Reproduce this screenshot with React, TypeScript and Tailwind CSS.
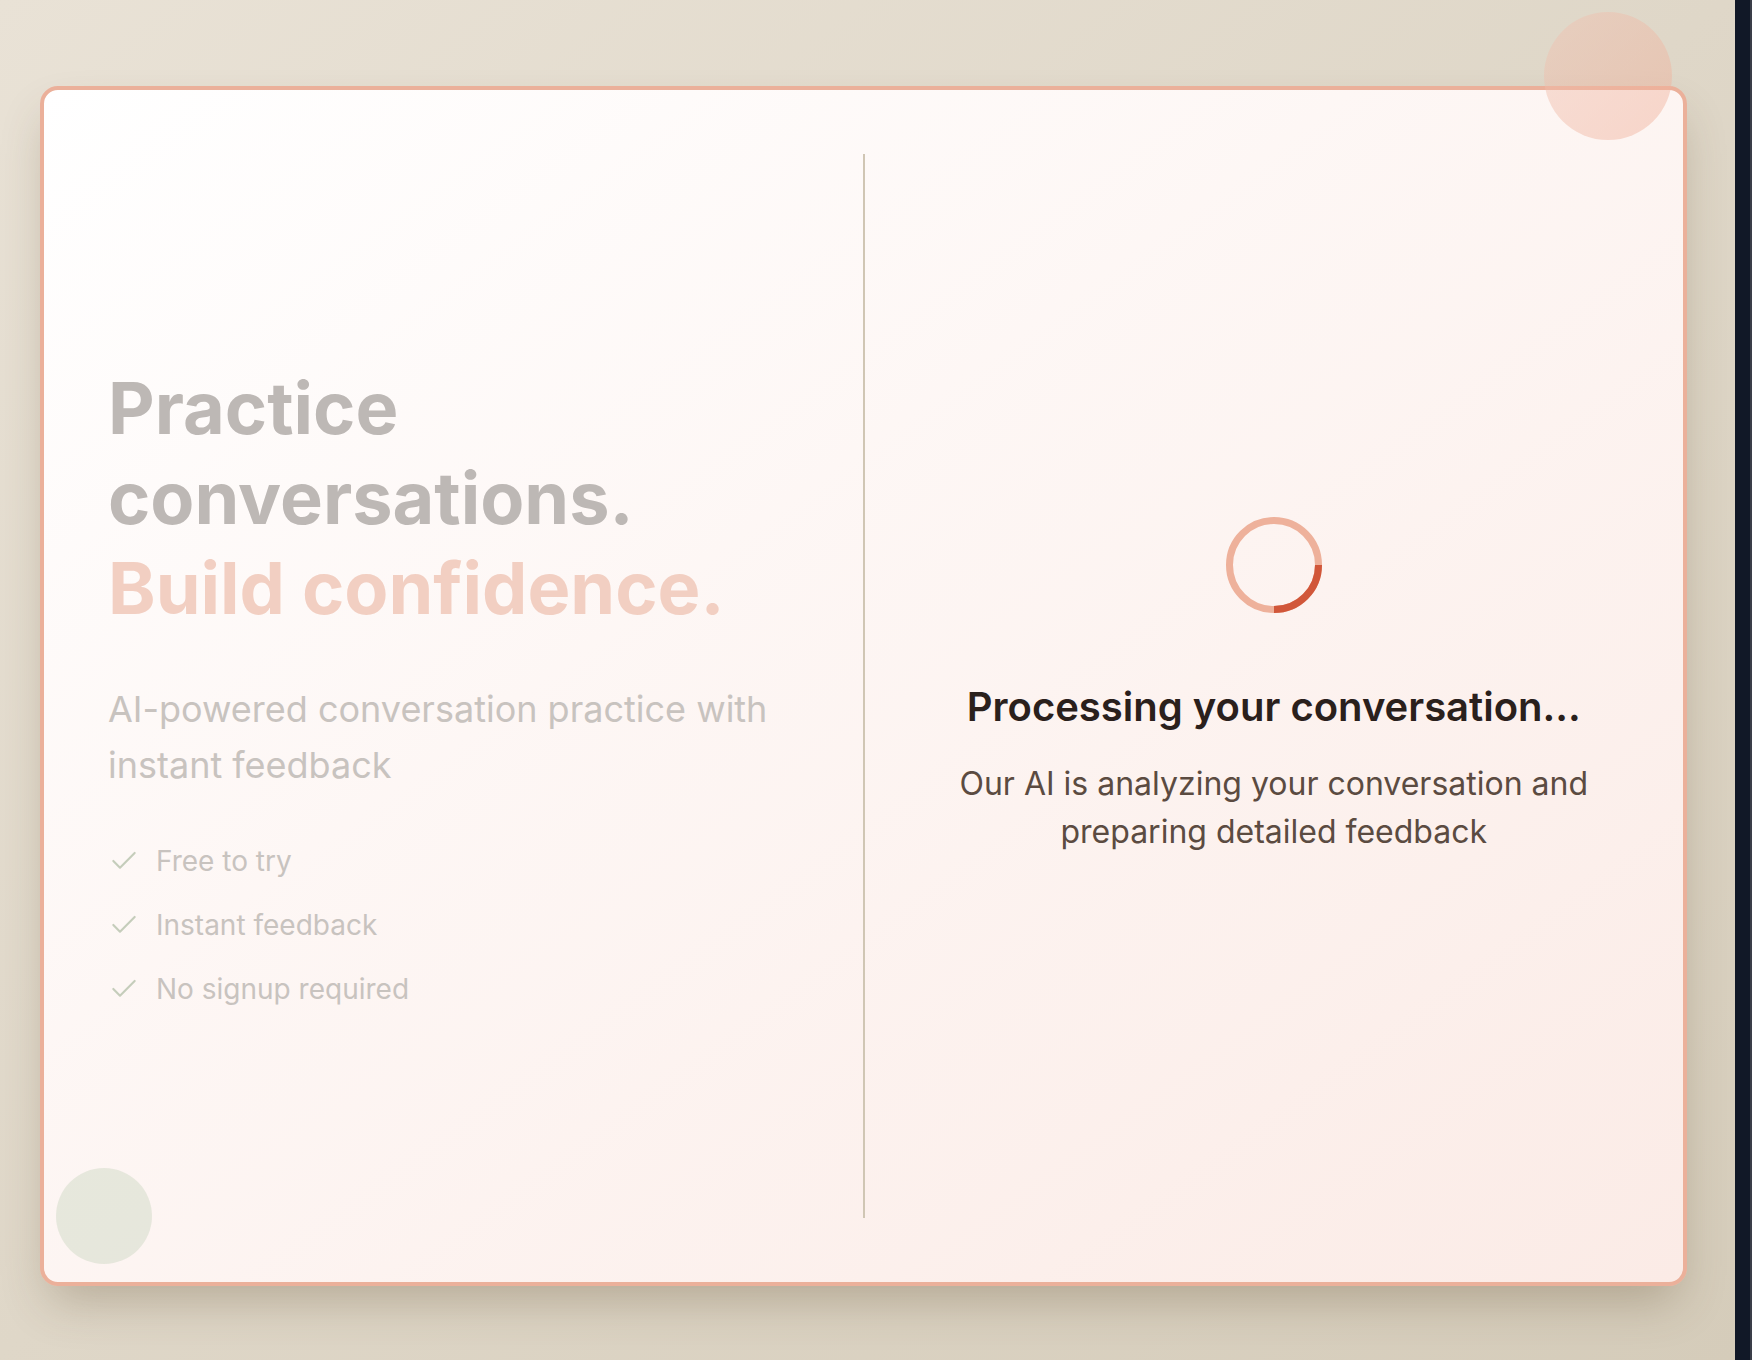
import { Check } from "lucide-react";

const perks = ["Free to try", "Instant feedback", "No signup required"];

// Quarter arc over a pale ring, like a border spinner caught mid-turn.
function Spinner() {
  return (
    <svg width="96" height="96" viewBox="0 0 96 96" aria-hidden="true">
      <circle cx="48" cy="48" r="44.5" fill="none" stroke="#eeb19b" strokeWidth="7" />
      <path d="M92.5 48 A44.5 44.5 0 0 1 48 92.5" fill="none" stroke="#d1573a" strokeWidth="7" />
    </svg>
  );
}

export default function App() {
  return (
    <div className="flex h-[1360px] w-full overflow-hidden font-['Inter',sans-serif]">
      <main className="flex-1 bg-linear-to-br from-[#e9e2d6] to-[#d5ccba] pl-10 pr-12 pt-[86px]">
        <section className="relative h-[1200px] rounded-[18px] border-4 border-[#ebb09a] bg-linear-to-br from-white to-[#fbebe6] shadow-[0_24px_48px_-10px_rgba(90,70,40,0.3)]">
          <span className="absolute -top-[78px] right-[11px] z-10 h-32 w-32 rounded-full bg-linear-to-br from-[#efc3b3]/45 to-[#f0ad96]/45" />
          <span className="absolute bottom-[18px] left-[12px] h-24 w-24 rounded-full bg-[#b4c8aa]/30" />

          <div className="grid h-full grid-cols-[1fr_2px_1fr] py-16">
            <div className="flex flex-col justify-center pl-16 pr-14">
              <h1 className="text-[72px] font-bold leading-[90px] text-[#bdb8b5]">
                Practice
                <br />
                conversations.
                <br />
                <span className="text-[#f2cfc2]">Build confidence.</span>
              </h1>
              <p className="mt-12 text-[36px] leading-[56px] text-[#c8c3bf]">
                AI-powered conversation practice with instant feedback
              </p>
              <ul className="mt-12 flex flex-col gap-6">
                {perks.map((perk) => (
                  <li key={perk} className="flex h-10 items-center gap-4 text-[28px] text-[#c8c3bf]">
                    <Check size={32} strokeWidth={1.6} className="text-[#c5cdbb]" />
                    {perk}
                  </li>
                ))}
              </ul>
            </div>

            <div className="bg-[#d0c6b4]" />

            <div className="flex flex-col items-center justify-center text-center">
              <Spinner />
              <h2 className="mt-[70px] text-[40px] font-semibold leading-[48px] text-[#2a201c]">
                Processing your conversation...
              </h2>
              <p className="mt-[29px] px-8 text-[32px] leading-[48px] text-[#5b4b41]">
                Our AI is analyzing your conversation and preparing detailed feedback
              </p>
            </div>
          </div>
        </section>
      </main>
      <div className="w-[17px] border-r-2 border-[#3a3e48] bg-[#111827]" />
    </div>
  );
}
